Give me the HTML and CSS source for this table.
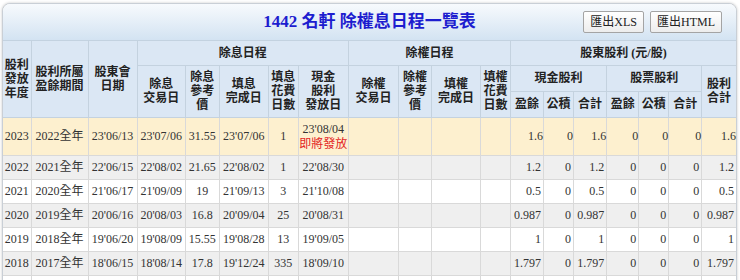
FILE: index.html
```html
<!DOCTYPE html>
<html lang="zh-Hant">
<head>
<meta charset="utf-8">
<title>1442 名軒 除權息日程一覽表</title>
<link rel="stylesheet" href="styles.css">
</head>
<body>
<div class="panel">
  <div class="titlebar">
    <div></div>
    <h1 class="title">1442 名軒 除權息日程一覽表</h1>
    <div class="actions">
      <button class="btn">匯出XLS</button>
      <button class="btn">匯出HTML</button>
    </div>
  </div>
  <table class="grid">
    <colgroup>
      <col class="w28"><col class="w57"><col class="w49"><col class="w48"><col class="w34">
      <col class="w49"><col class="w30"><col class="w50"><col class="w50"><col class="w33">
      <col class="w49"><col class="w30"><col class="w33"><col class="w30"><col class="w33">
      <col class="w32"><col class="w30"><col class="w33"><col class="w34">
    </colgroup>
    <thead>
      <tr class="h1">
        <th rowspan="3">股利<br>發放<br>年度</th>
        <th rowspan="3">股利所屬<br>盈餘期間</th>
        <th rowspan="3">股東會<br>日期</th>
        <th colspan="5">除息日程</th>
        <th colspan="4">除權日程</th>
        <th colspan="7">股東股利 (元/股)</th>
      </tr>
      <tr class="h2">
        <th rowspan="2">除息<br>交易日</th>
        <th rowspan="2">除息<br>參考<br>價</th>
        <th rowspan="2">填息<br>完成日</th>
        <th rowspan="2">填息<br>花費<br>日數</th>
        <th rowspan="2">現金<br>股利<br>發放日</th>
        <th rowspan="2">除權<br>交易日</th>
        <th rowspan="2">除權<br>參考<br>價</th>
        <th rowspan="2">填權<br>完成日</th>
        <th rowspan="2">填權<br>花費<br>日數</th>
        <th colspan="3">現金股利</th>
        <th colspan="3">股票股利</th>
        <th rowspan="2">股利<br>合計</th>
      </tr>
      <tr class="h3">
        <th>盈餘</th><th>公積</th><th>合計</th>
        <th>盈餘</th><th>公積</th><th>合計</th>
      </tr>
    </thead>
    <tbody>
      <tr class="hl">
        <td>2023</td><td>2022全年</td><td>23'06/13</td><td>23'07/06</td><td>31.55</td><td>23'07/06</td><td>1</td>
        <td>23'08/04<br><span class="soon">即將發放</span></td>
        <td></td><td></td><td></td><td></td>
        <td class="n">1.6</td><td class="n">0</td><td class="n">1.6</td><td class="n">0</td><td class="n">0</td><td class="n">0</td><td class="n">1.6</td>
      </tr>
      <tr class="alt">
        <td>2022</td><td>2021全年</td><td>22'06/15</td><td>22'08/02</td><td>21.65</td><td>22'08/02</td><td>1</td><td>22'08/30</td>
        <td></td><td></td><td></td><td></td>
        <td class="n">1.2</td><td class="n">0</td><td class="n">1.2</td><td class="n">0</td><td class="n">0</td><td class="n">0</td><td class="n">1.2</td>
      </tr>
      <tr>
        <td>2021</td><td>2020全年</td><td>21'06/17</td><td>21'09/09</td><td>19</td><td>21'09/13</td><td>3</td><td>21'10/08</td>
        <td></td><td></td><td></td><td></td>
        <td class="n">0.5</td><td class="n">0</td><td class="n">0.5</td><td class="n">0</td><td class="n">0</td><td class="n">0</td><td class="n">0.5</td>
      </tr>
      <tr class="alt">
        <td>2020</td><td>2019全年</td><td>20'06/16</td><td>20'08/03</td><td>16.8</td><td>20'09/04</td><td>25</td><td>20'08/31</td>
        <td></td><td></td><td></td><td></td>
        <td class="n">0.987</td><td class="n">0</td><td class="n">0.987</td><td class="n">0</td><td class="n">0</td><td class="n">0</td><td class="n">0.987</td>
      </tr>
      <tr>
        <td>2019</td><td>2018全年</td><td>19'06/20</td><td>19'08/09</td><td>15.55</td><td>19'08/28</td><td>13</td><td>19'09/05</td>
        <td></td><td></td><td></td><td></td>
        <td class="n">1</td><td class="n">0</td><td class="n">1</td><td class="n">0</td><td class="n">0</td><td class="n">0</td><td class="n">1</td>
      </tr>
      <tr class="alt">
        <td>2018</td><td>2017全年</td><td>18'06/15</td><td>18'08/14</td><td>17.8</td><td>19'12/24</td><td>335</td><td>18'09/10</td>
        <td></td><td></td><td></td><td></td>
        <td class="n">1.797</td><td class="n">0</td><td class="n">1.797</td><td class="n">0</td><td class="n">0</td><td class="n">0</td><td class="n">1.797</td>
      </tr>
      <tr>
        <td>2017</td><td>2016全年</td><td>17'06/16</td><td>17'08/03</td><td>17.5</td><td>17'08/07</td><td>4</td><td>17'08/25</td>
        <td></td><td></td><td></td><td></td>
        <td class="n">1.5</td><td class="n">0</td><td class="n">1.5</td><td class="n">0</td><td class="n">0</td><td class="n">0</td><td class="n">1.5</td>
      </tr>
    </tbody>
  </table>
</div>
</body>
</html>
```

FILE: styles.css
```css
html, body {
  margin: 0;
  padding: 0;
  background: #ffffff;
}

body {
  font-family: "Liberation Serif", "Noto Sans CJK TC", serif;
  font-size: 12px;
  color: #333333;
}

.panel {
  margin: 3px 3px 0 2px;
  border: 1px solid #c9cfd6;
  border-radius: 8px;
  overflow: hidden;
  box-shadow: 0 0 3px rgba(0, 0, 0, 0.22);
  background: #ffffff;
}

.titlebar {
  display: grid;
  grid-template-columns: 1fr auto 1fr;
  align-items: center;
  height: 36px;
  background: linear-gradient(#f7fafd, #d3e3f2);
  border-bottom: 1px solid #c3d2e0;
}

.title {
  margin: 0;
  font-size: 17px;
  font-weight: bold;
  color: #1d1dcf;
  white-space: nowrap;
  line-height: 20px;
}

.actions {
  display: flex;
  justify-content: flex-end;
  gap: 6px;
  padding-right: 14px;
}

.btn {
  font-family: "Liberation Serif", "Noto Sans CJK TC", serif;
  font-size: 12px;
  color: #222222;
  height: 22px;
  padding: 0 6px;
  border: 1px solid #a4a4a4;
  border-radius: 2px;
  background: linear-gradient(#ffffff, #ededed);
  line-height: 20px;
}

.grid {
  width: 100%;
  table-layout: fixed;
  border-collapse: collapse;
}

.w28 { width: 28px; }
.w30 { width: 30px; }
.w32 { width: 32px; }
.w33 { width: 33px; }
.w34 { width: 34px; }
.w48 { width: 48px; }
.w49 { width: 49px; }
.w50 { width: 50px; }
.w57 { width: 57px; }

.grid th {
  background: #dbe7f4;
  border: 1px solid #c4d2df;
  font-weight: bold;
  color: #222222;
  line-height: 14px;
  padding: 0;
  vertical-align: middle;
  text-align: center;
}

.grid thead tr:first-child th {
  border-top: none;
}

.grid tr > :first-child {
  border-left: none;
}

.grid tr > :last-child {
  border-right: none;
}

.h1 { height: 24px; }
.h2 { height: 26px; }
.h3 { height: 26px; }

.grid td {
  border: 1px solid #d9d9d9;
  padding: 4px 0;
  line-height: 15px;
  text-align: center;
  white-space: nowrap;
  color: #333333;
}

.grid tbody tr.hl td {
  padding: 4px 0 3px;
}

.grid td.n {
  text-align: right;
  padding-right: 2px;
}

.grid tbody tr { background: #ffffff; }
.grid tbody tr.alt { background: #efefef; }
.grid tbody tr.hl { background: #fdf0cf; }

.soon {
  color: #e32424;
}
```
